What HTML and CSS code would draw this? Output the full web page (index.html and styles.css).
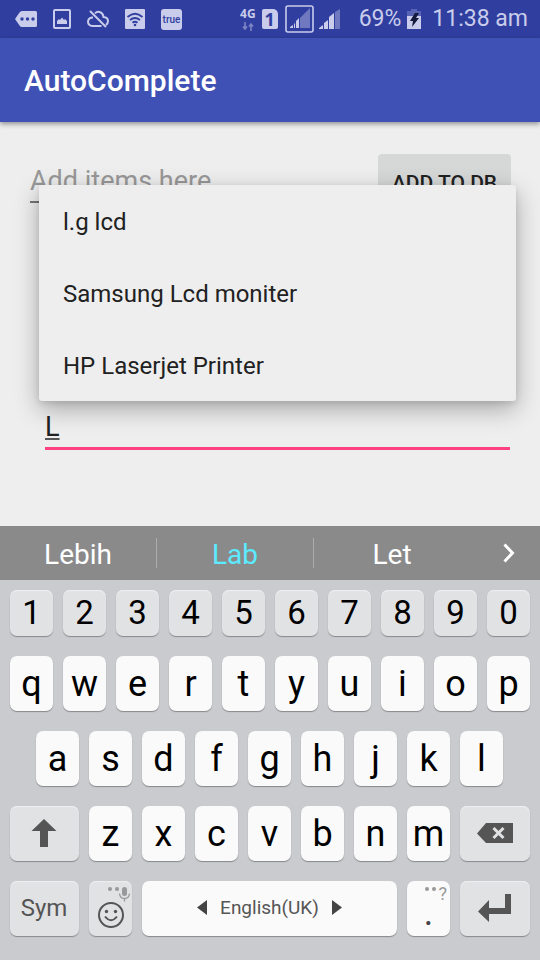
FILE: index.html
```html
<!DOCTYPE html>
<html lang="en">
<head>
<meta charset="utf-8">
<meta name="viewport" content="width=device-width, initial-scale=1">
<title>AutoComplete</title>
<link rel="stylesheet" href="styles.css">
</head>
<body>
<div class="status">
  <div class="status-left">
    <svg width="22" height="18" viewBox="0 0 22 18"><path d="M7 1h13.500a1.500 1.500 0 0 1 1.500 1.500v13a1.500 1.500 0 0 1-1.500 1.500H7Q5.500 17 4.500 15.500L0 9l4.500-6.500Q5.500 1 7 1z" fill="#c9cceb"/><g fill="#303f9f"><circle cx="7" cy="9" r="1.700"/><circle cx="12.500" cy="9" r="1.700"/><circle cx="18" cy="9" r="1.700"/></g></svg>
    <svg width="18" height="20" viewBox="0 0 18 20"><rect x="1" y="1" width="16" height="18" rx="1" fill="none" stroke="#c9cceb" stroke-width="2"/><path d="M4 15v-3l2-2 1 1 2-2.500 2 2.500 1-1 2 2v3z" fill="#c9cceb"/></svg>
    <svg width="22" height="18" viewBox="0 0 22 18"><g fill="none" stroke="#c9cceb" stroke-width="2"><path d="M8 3.500Q10 1 12.500 2q3.500 1 4 5 4.500.5 4.500 4 0 2.500-2 4M14.500 16H5.500Q1 15.500 1 11.500 1.500 7.500 6 7.500"/><path d="M3 1l16 16"/></g></svg>
    <svg width="20" height="20" viewBox="0 0 20 20"><rect width="20" height="20" rx="1" fill="#c9cceb"/><g fill="none" stroke="#303f9f" stroke-width="1.800"><path d="M2.500 8Q10 1.500 17.500 8M5 11q5-4 10 0M7.500 13.700q2.500-2 5 0"/></g><circle cx="10" cy="16" r="1.300" fill="#303f9f"/></svg>
    <span class="true-badge">true</span>
  </div>
  <div class="status-right">
    <div class="net"><span>4G</span><svg width="12" height="9" viewBox="0 0 12 9"><g fill="none" stroke="#7c85c4" stroke-width="1.600"><path d="M3 0v7M1 4.500l2 2.500 2-2.500M9 9V2M7 4.500L9 2l2 2.500"/></g></svg></div>
    <span class="sim">1</span>
    <svg class="box" width="29" height="28" viewBox="0 0 29 28"><rect x="1" y="1" width="27" height="26" rx="2" fill="none" stroke="#c9cceb" stroke-width="1.600"/><path d="M15 13l10-10v20H15z" fill="#7079bf"/><path d="M5 23v-1l3-2v3zM9 23v-4l1-1v5zM11 23v-7l3-3v10z" fill="#c9cceb"/></svg>
    <svg class="bars" width="22" height="22" viewBox="0 0 22 22"><path d="M0 21v-1l4-3v4zM5 21v-6l4-3v9zM10 21V9l5-4v16z" fill="#c9cceb"/><path d="M16 21V4l5-3v20z" fill="#7079bf"/></svg>
    <span class="percent">69%</span>
    <svg class="battery" width="14" height="20" viewBox="0 0 14 20"><path d="M0 2h4V0h6v2h4v6H0z" fill="#5964b4"/><path d="M0 7h14v13H0z" fill="#c9cceb"/><path d="M8 4h4l-3 5h3l-7 9 1-6H3z" fill="#151a3d"/></svg>
    <time>11:38 am</time>
  </div>
</div>
<header class="appbar"><h1>AutoComplete</h1></header>
<main class="content">
  <div class="add-row">
    <input class="item-input" type="text" placeholder="Add items here" aria-label="Add items here">
    <button class="add-button" type="button">ADD TO DB</button>
  </div>
  <div class="complete">
    <input class="complete-input" type="text" value="L" aria-label="Search items">
    <div class="popup">
      <button type="button">l.g lcd</button>
      <button type="button">Samsung Lcd moniter</button>
      <button type="button">HP Laserjet Printer</button>
    </div>
  </div>
</main>
<div class="suggestions">
  <button type="button">Lebih</button>
  <button type="button" class="active">Lab</button>
  <button type="button">Let</button>
  <button type="button" class="more" aria-label="More suggestions"><svg width="12" height="20" viewBox="0 0 12 20"><path d="M1.500 1.500L9.500 10l-8 8.500" fill="none" stroke="#fff" stroke-width="3"/></svg></button>
</div>
<div class="keyboard">
  <div class="keys numbers"><button>1</button><button>2</button><button>3</button><button>4</button><button>5</button><button>6</button><button>7</button><button>8</button><button>9</button><button>0</button></div>
  <div class="keys"><button>q</button><button>w</button><button>e</button><button>r</button><button>t</button><button>y</button><button>u</button><button>i</button><button>o</button><button>p</button></div>
  <div class="keys middle"><button>a</button><button>s</button><button>d</button><button>f</button><button>g</button><button>h</button><button>j</button><button>k</button><button>l</button></div>
  <div class="keys lower">
    <button class="fn" aria-label="Shift"><svg width="26" height="28" viewBox="0 0 26 28"><path d="M13 0l12.500 12H17v16H9V12H.5z" fill="#555"/></svg></button>
    <button>z</button><button>x</button><button>c</button><button>v</button><button>b</button><button>n</button><button>m</button>
    <button class="fn" aria-label="Backspace"><svg width="36" height="20" viewBox="0 0 36 20"><path d="M9 0h27v20H9L0 10.500z" fill="#555"/><path d="M16.500 5l10 10M26.500 5l-10 10" stroke="#e1e2e4" stroke-width="3" fill="none"/></svg></button>
  </div>
  <div class="keys bottom">
    <button class="fn sym">Sym</button>
    <button class="fn emoji" aria-label="Emoji"><svg width="43" height="55" viewBox="0 0 43 55"><g fill="#999"><circle cx="21" cy="8" r="2"/><circle cx="28" cy="8" r="2"/><rect x="33" y="6" width="5" height="9" rx="2.500"/></g><path d="M30.500 12.500q.5 5 5 5t5-5M35.500 17.500v3" fill="none" stroke="#999" stroke-width="1.300"/><circle cx="22" cy="34" r="12" fill="none" stroke="#555" stroke-width="2"/><circle cx="17.500" cy="30.500" r="1.700" fill="#555"/><circle cx="26.500" cy="30.500" r="1.700" fill="#555"/><path d="M16 35.500q6 7.500 12 0" fill="none" stroke="#555" stroke-width="2"/></svg></button>
    <button class="space"><svg width="10" height="15" viewBox="0 0 10 15"><path d="M10 0v15L0 7.500z" fill="#444"/></svg><span>English(UK)</span><svg width="10" height="15" viewBox="0 0 10 15"><path d="M0 0v15l10-7.500z" fill="#444"/></svg></button>
    <button class="period"><span class="hint"><svg width="11" height="4" viewBox="0 0 11 4"><circle cx="2" cy="2" r="2" fill="#999"/><circle cx="9" cy="2" r="2" fill="#999"/></svg>?</span><span class="dot">.</span></button>
    <button class="fn" aria-label="Enter"><svg width="33" height="28" viewBox="0 0 33 28"><path d="M33 0v20H11v8L0 17.500 11 6v8h16V0z" fill="#555"/></svg></button>
  </div>
</div>
</body>
</html>
```
FILE: styles.css
```css
* { box-sizing: border-box; }
body {
  margin: 0;
  min-height: 100vh;
  display: flex;
  flex-direction: column;
  background: #eeeeee;
  color: #212121;
  font-family: Roboto, sans-serif;
}
button, input {
  font-family: inherit;
  color: inherit;
  border: 0;
  margin: 0;
  padding: 0;
  background: none;
}
input { outline: 0; border-radius: 0; min-width: 0; }
svg { display: block; flex: none; }

.status {
  height: 38px;
  padding: 0 12px 0 15px;
  display: flex;
  justify-content: space-between;
  align-items: center;
  background: #303f9f;
  color: #c9cceb;
}
.status-left { display: flex; align-items: center; gap: 16px; }
.true-badge {
  width: 21px;
  height: 21px;
  border-radius: 3px;
  background: #c9cceb;
  color: #303f9f;
  font-size: 10px;
  font-weight: 500;
  line-height: 21px;
  text-align: center;
}
.status-right { display: flex; align-items: center; font-size: 23px; line-height: 40px; white-space: nowrap; }
.net { display: flex; flex-direction: column; align-items: center; gap: 2px; margin-right: 6px; font: bold 12px/12px "Open Sans", sans-serif; }
.sim {
  width: 16px;
  height: 20px;
  margin-right: 7px;
  border-radius: 2px 5px 2px 2px;
  background: #c9cceb;
  color: #303f9f;
  font: bold 18px/20px "Open Sans", sans-serif;
  text-align: center;
}
.box { margin-right: 5px; }
.bars { margin-right: 18px; }
.percent { margin-right: 6px; }
.battery { margin-right: 11px; }

.appbar {
  height: 84px;
  padding: 2px 24px 0;
  display: flex;
  align-items: center;
  background: #3f51b5;
  color: #fff;
  box-shadow: 0 2px 5px rgba(0, 0, 0, 0.4);
}
.appbar h1 { margin: 0; font-size: 30px; line-height: 36px; font-weight: 500; }

.content { flex: 1; padding: 32px 29px 0 30px; }
.add-row { display: flex; align-items: flex-start; gap: 12px; }
.item-input {
  flex: 1;
  height: 49px;
  padding-top: 6px;
  border-bottom: 2px solid #757575;
  font-size: 27px;
}
.item-input::placeholder { color: #989898; opacity: 1; }
.add-button {
  width: 133px;
  height: 56px;
  padding-top: 2px;
  border-radius: 4px;
  background: #d6d7d7;
  font-size: 21px;
  font-weight: 500;
}
.complete { position: relative; margin: 197px 1px 0 15px; }
.complete-input {
  display: block;
  width: 100%;
  height: 43px;
  border-bottom: 3px solid #ff4081;
  font-size: 27px;
  text-decoration: underline;
  text-decoration-thickness: 2px;
  text-decoration-color: #555;
  text-underline-offset: 2px;
}
.popup {
  position: absolute;
  left: -6px;
  right: -6px;
  bottom: calc(100% + 6px);
  border-radius: 3px;
  background: #eeeeee;
  box-shadow: 0 8px 24px rgba(0, 0, 0, 0.3), 0 2px 6px rgba(0, 0, 0, 0.1);
}
.popup button {
  display: block;
  width: 100%;
  height: 72px;
  padding: 2px 24px 0;
  font-size: 24px;
  text-align: left;
}

.suggestions {
  height: 54px;
  display: grid;
  grid-template-columns: repeat(3, 157fr) 69fr;
  align-items: center;
  background: #8a8a8b;
  color: #fff;
}
.suggestions button {
  height: 30px;
  border-right: 1px solid #adadae;
  font-size: 28px;
  line-height: 34px;
}
.suggestions button:nth-child(n + 3) { border-color: transparent; }
.suggestions .active { color: #5ceaff; }
.suggestions .more { display: flex; align-items: center; justify-content: center; padding-left: 8px; }

.keyboard {
  padding: 10px 10px 24px;
  display: flex;
  flex-direction: column;
  gap: 20px;
  background: #cacbcf;
}
.keys { display: grid; grid-template-columns: repeat(10, 1fr); gap: 10px; }
.keys button {
  min-width: 0;
  height: 55px;
  border-radius: 7px;
  background: #fafafa;
  box-shadow: 0 1px 1px #88898c;
  color: #000;
  font-size: 36px;
  line-height: 50px;
}
.numbers button { height: 46px; font-size: 33px; line-height: 44px; }
.keys .fn, .numbers button { background: #e1e2e4; box-shadow: 0 1px 1px #88898c, inset 0 1px 1px #f0f0f1; }
.keys .fn { display: flex; align-items: center; justify-content: center; padding: 0 1px 2px 0; }
.keys .emoji { padding: 0; }
.middle { grid-template-columns: repeat(9, 1fr); padding: 0 27px 0 26px; }
.lower { grid-template-columns: 69fr repeat(7, 43fr) 70fr; }
.bottom { grid-template-columns: 69fr 43fr 255fr 43fr 70fr; }
.keys .sym { color: #555; font-size: 24px; }
.keys .space { display: flex; align-items: center; justify-content: center; gap: 13px; padding-bottom: 2px; color: #555; font-size: 19px; }
.keys .period { display: flex; flex-direction: column; color: #444; }
.hint { display: flex; align-self: flex-end; gap: 2px; padding: 6px 3px 0 0; color: #999; font-size: 18px; line-height: 14px; }
.dot { align-self: center; font-size: 36px; line-height: 24px; }
```
